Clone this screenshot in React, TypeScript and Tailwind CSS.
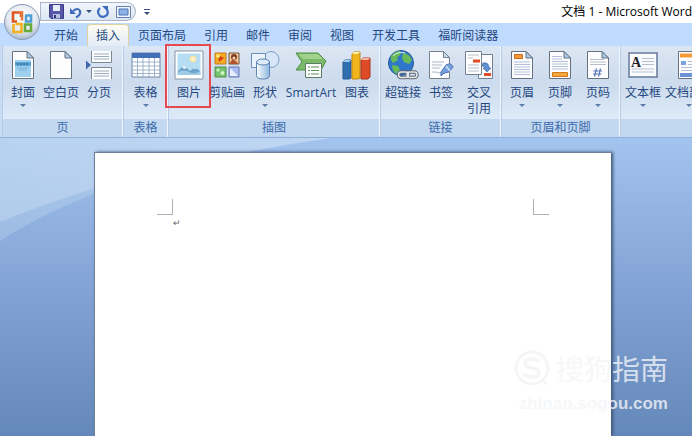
import React from 'react';
import { clsx } from 'clsx';

const tabs = ['开始', '插入', '页面布局', '引用', '邮件', '审阅', '视图', '开发工具', '福昕阅读器'];

const Sheet = ({ children }: { children?: React.ReactNode }) => (
  <svg width="24" height="30" viewBox="0 0 24 30">
    <path d="M1.500 1.500h14.500l6.500 6.500v20.500H1.500z" fill="#fdfdfe" stroke="#66727f" />
    <path d="M16 1.500v6.500h6.500z" fill="#a9cdea" stroke="#66727f" strokeLinejoin="round" />
    {children}
  </svg>
);

const CoverIcon = () => (
  <Sheet>
    <path d="M4 10h16v17H4z" fill="#9fd0ee" />
    <path d="M4 12h16v4H4z" fill="#5aa5d4" />
    <path d="M6 14h12" stroke="#3e7fae" strokeWidth="2" strokeDasharray="2 1" />
    <path d="M6 18h12M8 20h8" stroke="#6fa9d0" strokeWidth=".8" />
  </Sheet>
);

const HeaderIcon = () => (
  <Sheet>
    <path d="M4.500 4.500h8v4h-8z" fill="#f59a3a" stroke="#c86a1c" />
    <path d="M4 12h16M4 14.500h16M4 17h16M4 19.500h16M4 22h16M4 24.500h16" stroke="#b4bfdc" />
  </Sheet>
);

const FooterIcon = () => (
  <Sheet>
    <path d="M4 6.500h10M4 9h10M4 11.500h16M4 14h16M4 16.500h16M4 19h16" stroke="#b4bfdc" />
    <path d="M4.500 22.500h15v4h-15z" fill="#f9a63e" stroke="#d07a1c" />
  </Sheet>
);

const PageNumberIcon = () => (
  <Sheet>
    <path d="M4 9.500h14M4 12h16M4 14.500h16" stroke="#b9bfca" />
    <path d="M10.500 18.500l-2 8M14.500 18.500l-2 8M7.500 21h8.500M7 24h8.500" stroke="#5b78b8" strokeWidth="1.200" />
  </Sheet>
);

const PageBreakIcon = () => (
  <svg width="30" height="30" viewBox="0 0 30 30">
    <path d="M7.500 1v11.500h20V1M7.500 29V17.500h20V29" fill="#fcfdfe" stroke="#7b8794" />
    <path d="M10 4h15M10 6.500h15M10 9h15M10 21h15M10 23.500h15M10 26h15" stroke="#9dabbd" />
    <path d="M2 10.500l5 4.500-5 4.500z" fill="#4468ae" />
  </svg>
);

const TableIcon = () => (
  <svg width="30" height="28" viewBox="0 0 30 28">
    <path d="M1 2h28v24H1z" fill="#fff" stroke="#6f86a8" />
    <path d="M1 2h28v5H1z" fill="#4270b8" />
    <path d="M1 11h28M1 15h28M1 19h28M1 22.500h28M6.500 7v19M12 7v19M18 7v19M23.500 7v19" stroke="#8ba3c4" strokeWidth=".8" />
  </svg>
);

const PictureIcon = () => (
  <svg width="30" height="30" viewBox="0 0 30 30">
    <path d="M1 1h28v28H1z" fill="#fdfefe" stroke="#8494a6" />
    <path d="M3.500 3.500h23v21h-23z" fill="#b5def4" />
    <circle cx="19" cy="9" r="3" fill="#fdf2c4" stroke="#f9dd95" />
    <path d="M4 21l6-6 6 6 5-4 5 4v4H4z" fill="#6ea3cc" />
    <path d="M8 17l2-2 3 3-3 1zM19 18.500l2-1.500 2 2z" fill="#e7f4fb" />
    <path d="M3.500 22q8-3 12 0t11-1v4h-23z" fill="#9dcbe4" />
  </svg>
);

const ClipArtIcon = () => (
  <svg width="28" height="28" viewBox="0 0 28 28">
    <path d="M2 2h11v11H2z" fill="#f6a923" stroke="#bf7e21" />
    <path d="M5 4l6 3-5 4z" fill="#d2401d" /><circle cx="5" cy="5" r="2" fill="#fce66a" />
    <path d="M16 2h10v11H16z" fill="#f4c997" stroke="#6d523c" />
    <circle cx="21" cy="6" r="3" fill="#7b3b22" /><path d="M17 13q1-5 4-4t4 4z" fill="#b0522c" /><circle cx="21" cy="7" r="1.500" fill="#f9d6ae" />
    <path d="M2 16h11v10H2z" fill="#73c46d" stroke="#538c53" />
    <circle cx="5" cy="19" r="1.500" fill="#d3f3c8" /><circle cx="9.500" cy="22" r="2" fill="#d3f3c8" />
    <path d="M16 16h10v10H16z" fill="#a9bcf0" stroke="#6274b0" />
    <path d="M17 17l8 8h-8z" fill="#e8eefe" />
  </svg>
);

const ShapesIcon = () => (
  <svg width="30" height="30" viewBox="0 0 30 30">
    <defs>
      <linearGradient id="cylinder">
        <stop offset="0" stopColor="#fafdff" />
        <stop offset="1" stopColor="#8fb7df" />
      </linearGradient>
    </defs>
    <circle cx="21" cy="9.500" r="8" fill="#d6e6f7" stroke="#7d9fc5" />
    <path d="M1.500 3.500h14v14h-14z" fill="#eaf3fb" stroke="#6d8fb7" />
    <path d="M6.500 12v13.500q0 3.500 6.500 3.500t6.500-3.500V12z" fill="url(#cylinder)" stroke="#5d84b4" />
    <ellipse cx="13" cy="12" rx="6.500" ry="3" fill="#dcebf9" stroke="#5d84b4" />
  </svg>
);

const SmartArtIcon = () => (
  <svg width="32" height="28" viewBox="0 0 32 28">
    <path d="M1 2h22l8 8-5 9H1l6-8z" fill="#7cb968" stroke="#4e8f45" />
    <path d="M3 3h20l5 5H8z" fill="#a2d28d" />
    <path d="M10.500 12.500h16v14h-16z" fill="#fff" stroke="#5d7a68" />
    <path d="M13 16h2M13 19.500h2M13 23h2M16 16h8M16 19.500h8M16 23h8" stroke="#5b8d53" />
  </svg>
);

const ChartIcon = () => (
  <svg width="30" height="30" viewBox="0 0 30 30">
    <path d="M1 12l2-2h6v18l-2 1H1z" fill="#2f6fb0" stroke="#285b91" /><path d="M1 12l2-2h6l-2 2z" fill="#a3cff2" />
    <path d="M10 4l2-2h6v26l-2 1h-6z" fill="#f0b51d" stroke="#be8511" /><path d="M10 4l2-2h6l-2 2z" fill="#fff0a3" />
    <path d="M19 10l2-2h7v19l-2 2h-7z" fill="#dd4b28" stroke="#a8341a" /><path d="M19 10l2-2h7l-2 2z" fill="#fbb79d" />
  </svg>
);

const LinkIcon = () => (
  <svg width="32" height="30" viewBox="0 0 32 30">
    <circle cx="14" cy="13" r="12.500" fill="#2f77cb" stroke="#27599b" />
    <path d="M4 6q4-5 9-5 2 3-1 5t-1 4l-5 3q-3-3-2-7zM16 3q7 1 9 7l-3 4-5-2-2-4zM5 15l6 1 2 4-4 4q-4-3-4-9z" fill="#68b957" />
    <path d="M6 6q5-5 12-3" stroke="#d9f3ff" fill="none" />
    <g fill="none" stroke="#5c6673" strokeWidth="3.500">
      <rect x="11.500" y="22" width="10" height="5.500" rx="2.700" /><rect x="20" y="22" width="10" height="5.500" rx="2.700" />
    </g>
    <g fill="none" stroke="#e5e8ec" strokeWidth="1.500">
      <rect x="11.500" y="22" width="10" height="5.500" rx="2.700" /><rect x="20" y="22" width="10" height="5.500" rx="2.700" />
    </g>
  </svg>
);

const BookmarkIcon = () => (
  <svg width="28" height="30" viewBox="0 0 28 30">
    <path d="M2.500 1.500h14l6 6v21h-20z" fill="#fcfdfe" stroke="#77818e" />
    <path d="M16.500 1.500v6h6z" fill="#c9dced" stroke="#77818e" />
    <path d="M5 12h12M5 15h10M5 18h8M5 22h4l3 1 4-1 2 2" fill="none" stroke="#b0b8c5" />
    <path d="M14 22l5-7q5-3 7 2l-4 5-5 1-3 3z" fill="#76a0dd" stroke="#4871b0" />
    <path d="M19 16l4 5" stroke="#d3e4f8" strokeWidth="1.500" />
  </svg>
);

const CrossRefIcon = () => (
  <svg width="30" height="30" viewBox="0 0 30 30">
    <path d="M14.500 4.500h14v24h-14z" fill="#fcfcfe" stroke="#737f91" />
    <path d="M1.500 1.500h16v23h-16z" fill="#fff" stroke="#737f91" />
    <path d="M4 5h11M4 8h5M4 15h11M4 18h11M4 21h11" stroke="#b4bdca" />
    <path d="M9 9.500h7v3H9zM20 23h7v3h-7z" fill="#e04c26" />
    <path d="M19 13q6-1 6 5h2l-4 4-4-4h2q0-2-3-2z" fill="#5f8fd3" stroke="#4269a6" strokeWidth=".7" />
  </svg>
);

const TextBoxIcon = () => (
  <svg width="30" height="26" viewBox="0 0 30 26">
    <path d="M1 1h28v24H1z" fill="#fafbfd" stroke="#66799a" strokeWidth="1.500" />
    <path d="M14 6.500h12M14 9.500h12M14 12.500h12M4 17h22M4 20h22" stroke="#b7c0d0" />
    <text x="3" y="15" fontFamily="Liberation Serif, serif" fontWeight="bold" fontSize="14" fill="#222">A</text>
  </svg>
);

const QuickPartsIcon = () => (
  <svg width="24" height="30" viewBox="0 0 24 30">
    <path d="M1.500 1.500h21v27h-21z" fill="#fdfdfe" stroke="#66727f" />
    <path d="M3 3.500h18v4H3z" fill="#f59a3a" />
    <path d="M4 11h5v4H4z" fill="#7aa2de" />
    <path d="M11 11.500h9M11 14.500h9M4 17.500h16M4 20.500h16" stroke="#b4bfdc" />
    <path d="M3 23h18v4H3z" fill="#6a93d3" />
  </svg>
);

type Item = { label: string; icon: React.FC; width: string; arrow?: boolean; marked?: boolean };
type Group = { name: string; className: string; items: Item[] };

const groups: Group[] = [
  {
    name: '页',
    className: 'w-[120px] pl-1',
    items: [
      { label: '封面', icon: CoverIcon, width: 'w-8', arrow: true },
      { label: '空白页', icon: () => <Sheet />, width: 'w-11' },
      { label: '分页', icon: PageBreakIcon, width: 'w-8' },
    ],
  },
  { name: '表格', className: 'w-11 justify-center', items: [{ label: '表格', icon: TableIcon, width: 'w-8', arrow: true }] },
  {
    name: '插图',
    className: 'w-[211px] pl-1',
    items: [
      { label: '图片', icon: PictureIcon, width: 'w-8', marked: true },
      { label: '剪贴画', icon: ClipArtIcon, width: 'w-11' },
      { label: '形状', icon: ShapesIcon, width: 'w-8', arrow: true },
      { label: 'SmartArt', icon: SmartArtIcon, width: 'w-15' },
      { label: '图表', icon: ChartIcon, width: 'w-8' },
    ],
  },
  {
    name: '链接',
    className: 'w-[120px]',
    items: [
      { label: '超链接', icon: LinkIcon, width: 'w-11' },
      { label: '书签', icon: BookmarkIcon, width: 'w-8' },
      { label: '交叉引用', icon: CrossRefIcon, width: 'w-11' },
    ],
  },
  {
    name: '页眉和页脚',
    className: 'w-[118px] pl-px',
    items: [
      { label: '页眉', icon: HeaderIcon, width: 'w-[38px]', arrow: true },
      { label: '页脚', icon: FooterIcon, width: 'w-[38px]', arrow: true },
      { label: '页码', icon: PageNumberIcon, width: 'w-[38px]', arrow: true },
    ],
  },
  {
    name: '',
    className: 'w-[240px]',
    items: [
      { label: '文本框', icon: TextBoxIcon, width: 'w-11', arrow: true },
      { label: '文档部件', icon: QuickPartsIcon, width: 'w-12', arrow: true },
    ],
  },
];

const RibbonButton = ({ label, icon: Icon, width, arrow, marked }: Item) => (
  <button className={clsx('relative flex shrink-0 flex-col items-center pt-1', width)}>
    <span className="flex h-[30px] items-center">
      <Icon />
    </span>
    <span className={clsx('mt-[5px] leading-4', label === '交叉引用' ? 'w-6' : 'whitespace-nowrap')}>{label}</span>
    {arrow && <span className="mt-[3px] border-x-[3px] border-t-[3px] border-x-transparent border-t-[#5d7ba8]" />}
    {marked && <span className="absolute -top-0.5 -left-2 z-10 h-16 w-[46px] border-2 border-[#e5484d]" />}
  </button>
);

const OfficeLogo = () => (
  <svg width="36" height="36" viewBox="0 0 36 36">
    <defs>
      <radialGradient id="orb" cx=".5" cy=".35" r=".65">
        <stop offset="0" stopColor="#ffffff" />
        <stop offset=".65" stopColor="#e3e9f1" />
        <stop offset="1" stopColor="#a9b7cb" />
      </radialGradient>
    </defs>
    <circle cx="18" cy="18" r="17.500" fill="url(#orb)" stroke="#8698b4" />
    <g fill="none" strokeWidth="2.600">
      <path d="M17 13V8.500H9v9h4" stroke="#dc5a22" />
      <path d="M14 8.500h4v8" stroke="#e9773b" />
      <path d="M21 11.500h6v6h-5v-6" stroke="#4d9fd6" />
      <path d="M9.500 20v8h8v-8h-6" stroke="#f2b21f" />
      <path d="M21 20.500h6v6.500h-6z" stroke="#6aaa3d" />
    </g>
  </svg>
);

const QuickAccess = () => (
  <div className="flex h-[19px] items-center rounded-r-full rounded-bl-2xl border border-[#a9b6c9] bg-gradient-to-b from-[#f2f6fb] to-[#dbe5f3] pr-1 pl-2">
    <button aria-label="保存">
      <svg width="15" height="15" viewBox="0 0 15 15">
        <path d="M.5.5h14v14H2l-1.500-1.500z" fill="#5757a9" stroke="#3c3c86" />
        <path d="M4 1h7v6H4z" fill="#e8edf9" /><path d="M4 10h7v4.500H4z" fill="#b9c2e2" /><path d="M5 11h2v3H5z" fill="#34347a" />
      </svg>
    </button>
    <button aria-label="撤消" className="ml-1.5">
      <svg width="12" height="14" viewBox="0 0 12 14">
        <path d="M3 6q5-4 7 0 1 4-4 6.500" fill="none" stroke="#3e6cbc" strokeWidth="2.200" /><path d="M0 3v6h6z" fill="#3e6cbc" />
      </svg>
    </button>
    <span className="ml-1 border-x-[3px] border-t-[3px] border-x-transparent border-t-[#35507f]" />
    <button aria-label="重复" className="ml-1">
      <svg width="14" height="14" viewBox="0 0 14 14">
        <path d="M4 3Q0 7 4 11q4 2 7-1 2-4-1-7" fill="none" stroke="#3e6cbc" strokeWidth="2.200" /><path d="M6 1h6v6z" fill="#3e6cbc" />
      </svg>
    </button>
    <button aria-label="全屏显示" className="ml-1.5">
      <svg width="15" height="12" viewBox="0 0 15 12">
        <path d="M.5.5h14v11H.5z" fill="#f1f6fd" stroke="#6681ad" /><path d="M3 3h9v6H3z" fill="#8eb2e6" stroke="#4c74b4" />
      </svg>
    </button>
  </div>
);

const Backdrop = () => (
  <svg className="absolute top-0 left-0" width="330" height="103" viewBox="0 0 330 103">
    <defs>
      <linearGradient id="glow">
        <stop offset="0" stopColor="#c4def0" stopOpacity=".45" />
        <stop offset="1" stopColor="#d8e6fa" stopOpacity=".5" />
      </linearGradient>
    </defs>
    <path d="M0 0h330Q130 30 0 84z" fill="url(#glow)" />
    <path d="M0 0h330Q110 30 0 103z" fill="#c6dcf2" fillOpacity=".3" />
  </svg>
);

export default function App() {
  return (
    <div className="relative flex min-h-screen flex-col overflow-hidden bg-white font-['Open_Sans','Noto_Sans_CJK_SC',sans-serif] text-xs text-[#24487f]">
      <header className="flex h-[23px] items-center justify-between pl-10 whitespace-nowrap">
        <div className="flex items-center gap-2">
          <QuickAccess />
          <button aria-label="自定义快速访问工具栏" className="flex flex-col items-center gap-0.5">
            <span className="h-px w-1.5 bg-[#35507f]" />
            <span className="border-x-[3px] border-t-[3px] border-x-transparent border-t-[#35507f]" />
          </button>
        </div>
        <h1 className="text-black">文档 1 - Microsoft Word</h1>
      </header>

      <button aria-label="Office 按钮" className="absolute top-1 left-1 z-10">
        <OfficeLogo />
      </button>

      <nav className="flex h-[23px] items-end bg-[#bfdbff] pl-[45px]">
        {tabs.map((tab) => (
          <button
            key={tab}
            className={clsx(
              'h-[22px] rounded-t-sm border border-b-0 px-2 whitespace-nowrap',
              tab === '插入' ? 'border-[#dfd29a] bg-gradient-to-b from-[#fdfcf3] to-[#e4ecf6]' : 'border-transparent',
            )}
          >
            {tab}
          </button>
        ))}
      </nav>

      <div className="flex border-b border-[#8fb0d8] bg-[#c9dcf3] pl-0.5">
        {groups.map((group, i) => (
          <section key={i} className="shrink-0 border-r border-[#f0f6fd]">
            <div className={clsx('flex h-[73px] border-l border-[#b5cce8] bg-gradient-to-b from-[#dce6f3] via-[#ccdbed] to-[#deeaf8]', group.className)}>
              {group.items.map((item) => (
                <RibbonButton key={item.label} {...item} />
              ))}
            </div>
            <h2 className="h-[18px] border-l border-[#b5cce8] bg-[#c1d8f0] text-center leading-[18px] text-[#3e6aaa]">{group.name}</h2>
          </section>
        ))}
      </div>

      <main className="relative flex flex-1 bg-gradient-to-b from-[#a3c4ee] via-[#82a3d5] to-[#6488b9] pt-3.5 pr-[81px] pl-[94px]">
        <Backdrop />
        <article className="relative flex-1 border-t border-l border-[#6f7f97] bg-white px-[62px] pt-[46px] shadow-[2px_0_3px_#3f5577]">
          <div className="flex justify-between">
            <span className="size-4 border-r border-b border-[#b0b0b0]" />
            <span className="size-4 border-b border-l border-[#b0b0b0]" />
          </div>
          <p className="pl-4 text-[9px] leading-4 text-[#666]">↵</p>
        </article>
        <div className="absolute right-6 bottom-5 text-[#f3f5f8]/80">
          <div className="flex items-center gap-1.5">
            <svg width="36" height="38" viewBox="0 0 36 38" fill="none" stroke="#f0f2f5" strokeOpacity=".8">
              <circle cx="18" cy="18" r="16" strokeWidth="3" />
              <path d="M25 12q-3-3-8-3-6 0-6 4t7 5 7 5-7 4q-5 0-8-3" strokeWidth="3.500" />
              <path d="M29 30l4 4" strokeWidth="3" />
            </svg>
            <span className="text-[28px] leading-9">搜狗指南</span>
          </div>
          <p className="mt-1 text-right font-['Liberation_Sans',sans-serif] text-[17px] leading-6 font-bold">zhinan.sogou.com</p>
        </div>
      </main>
    </div>
  );
}
